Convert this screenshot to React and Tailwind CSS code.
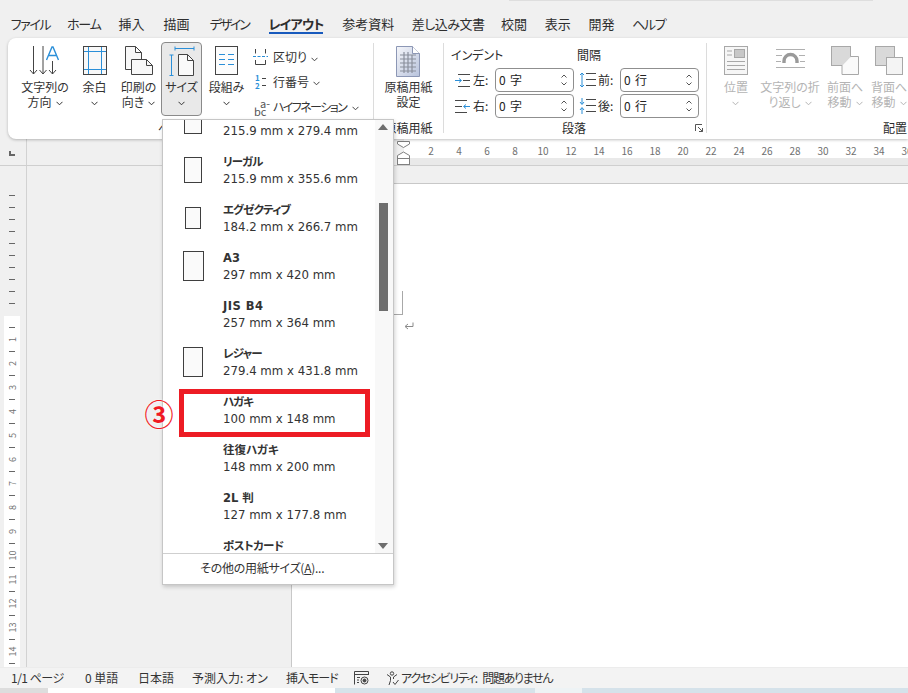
import React from "react";

const BLUE = "#2b8fd8";
const DARK = "#484848";

function Chev({ c = "#444" }) {
  return (
    <svg width="7" height="5" viewBox="0 0 7 5" className="inline-block" fill="none" stroke={c} strokeWidth="1">
      <path d="M0.5 0.8 L3.5 3.8 L6.5 0.8" />
    </svg>
  );
}

function BigBtn({ w, icon, lines, active, disabled }) {
  const c = disabled ? "#b4b4b4" : "#333";
  return (
    <div
      className={
        "flex flex-col items-center h-[74px] shrink-0 pt-[3px] " +
        (active ? "rounded-[4px] border border-[#8a8a8a] bg-[#e9e9e9] -mt-px" : "")
      }
      style={{ width: w, color: c }}
    >
      <div className="h-[33px] flex items-start justify-center">{icon}</div>
      <div className="text-[12px] leading-[15px] text-center whitespace-nowrap">
        <div>{lines[0]}</div>
        {lines[1] ? (
          <div>{lines[1]}<span className="ml-1"><Chev c={c} /></span></div>
        ) : (
          <div><Chev c={c} /></div>
        )}
      </div>
    </div>
  );
}

function Sep() {
  return <div className="w-px h-[90px] mt-[5px] bg-[#dcdcdc] shrink-0" />;
}

function Spin({ v }) {
  return (
    <div className="relative flex items-center w-[79px] h-[24px] rounded-[4px] border border-[#8f8f8f] bg-white pl-[3px] text-[12px] text-[#222] shrink-0">
      <span className="tracking-[0.8px]">{v}</span>
      <div className="ml-auto mr-[6px] flex flex-col items-center gap-[4px]">
        <svg width="6" height="4" viewBox="0 0 6 4" fill="none" stroke="#555"><path d="M0.5 3.5 L3 1 L5.5 3.5" /></svg>
        <svg width="6" height="4" viewBox="0 0 6 4" fill="none" stroke="#555"><path d="M0.5 0.5 L3 3 L5.5 0.5" /></svg>
      </div>
    </div>
  );
}

const Lines3 = ({ x = 0 }) => (
  <g stroke={DARK} strokeWidth="1">
    <path d={`M${x} 1.5 H${x + 10} M${x} 7.5 H${x + 10} M${x} 13.5 H${x + 10}`} />
  </g>
);

function SpaceIcon({ kind }) {
  if (kind === "left")
    return (
      <svg width="15" height="15" viewBox="0 0 15 15" fill="none">
        <path d="M3 1.5 H15 M8 7.5 H15 M3 13.5 H15" stroke={DARK} />
        <path d="M0 7.5 H6 M4 5.5 L6.5 7.5 L4 9.5" stroke={BLUE} />
      </svg>
    );
  if (kind === "right")
    return (
      <svg width="15" height="15" viewBox="0 0 15 15" fill="none">
        <path d="M0 1.5 H12 M0 7.5 H7 M0 13.5 H12" stroke={DARK} />
        <path d="M15 7.5 H9 M11 5.5 L8.5 7.5 L11 9.5" stroke={BLUE} />
      </svg>
    );
  if (kind === "before")
    return (
      <svg width="17" height="16" viewBox="0 0 17 16" fill="none">
        <Lines3 x={7} />
        <path d="M3 1 V15 M1 3 L3 1 L5 3 M1 13 L3 15 L5 13" stroke={BLUE} />
      </svg>
    );
  return (
    <svg width="17" height="16" viewBox="0 0 17 16" fill="none">
      <Lines3 x={7} />
      <path d="M3 0 V6 M1 4 L3 6.5 L5 4 M3 10 V16 M1 12 L3 9.5 L5 12" stroke={BLUE} />
    </svg>
  );
}

function Sheet({ w, h }) {
  return <div className="border border-[#3f3f3f] bg-[#fafafa]" style={{ width: w, height: h }} />;
}

const items = [
  { t: "", s: "215.9 mm x 279.4 mm", i: [18, 23] },
  { t: "リーガル", k: "tracking-[-0.9px]", s: "215.9 mm x 355.6 mm", i: [18, 26] },
  { t: "エグゼクティブ", k: "tracking-[-0.9px]", s: "184.2 mm x 266.7 mm", i: [16, 22] },
  { t: "A3", k: "", s: "297 mm x 420 mm", i: [21, 30] },
  { t: "JIS B4", k: "tracking-[0.5px]", s: "257 mm x 364 mm" },
  { t: "レジャー", k: "tracking-[-0.9px]", s: "279.4 mm x 431.8 mm", i: [20, 30] },
  { t: "ハガキ", k: "tracking-[-0.9px]", s: "100 mm x 148 mm" },
  { t: "往復ハガキ", k: "", s: "148 mm x 200 mm" },
  { t: "2L 判", k: "", s: "127 mm x 177.8 mm" },
  { t: "ポストカード", k: "tracking-[-0.5px]", s: "" },
];

const rulerNums = [2, 4, 6, 8, 10, 12, 14, 16, 18, 20, 22, 24, 26, 28, 30, 32, 34, 36];
const tabs = [
  ["ファイル", 37, "tracking-[-1.4px]"], ["ホーム", 32, "tracking-[-1.2px]"], ["挿入", 26, ""], ["描画", 26, ""],
  ["デザイン", 42, "tracking-[-2.2px]"], ["レイアウト", 54, "tracking-[-0.8px]"],
  ["参考資料", 53, ""], ["差し込み文書", 69, "tracking-[-0.5px]"], ["校閲", 25, ""], ["表示", 25, ""], ["開発", 25, ""], ["ヘルプ", 32, "tracking-[-1.3px]"],
];

const Tick = () => (
  <div className="h-[12px] flex items-center justify-center">
    <div className="w-[6px] h-px bg-[#666]" />
  </div>
);

export default function App() {
  return (
    <div className="relative w-[908px] h-[693px] overflow-hidden flex flex-col bg-[#f0f0f0] text-[#2b2b2b] [font-feature-settings:'palt'] font-['Noto_Sans_CJK_JP','Noto_Sans',sans-serif]">
      <div className="absolute left-[509px] top-0 w-[364px] h-px bg-[#dedede]" />

      {/* tabs */}
      <div className="h-[38px] shrink-0 flex items-start pl-[12px] pt-[15px] gap-[18.8px] text-[13px] leading-[18px] text-[#2e2e2e]">
        {tabs.map(([t, w, k]) => (
          <div key={t} className="relative flex justify-center whitespace-nowrap" style={{ width: w }}>
            <span className={(t === "レイアウト" ? "font-bold " : "") + k}>{t}</span>
            {t === "レイアウト" && <div className="absolute left-0 right-0 top-[17px] h-[2px] bg-[#185abd]" />}
          </div>
        ))}
      </div>

      {/* ribbon */}
      <div className="relative z-10 ml-2 h-[101px] shrink-0 bg-white rounded-l-[8px] shadow-[0_1px_3px_rgba(0,0,0,0.25)] flex overflow-hidden">
        <div className="w-[365px] shrink-0 mt-[5px] flex flex-col">
          <div className="flex h-[76px] pl-[9px]">
            <BigBtn w={56} lines={["文字列の", "方向"]} icon={
              <svg width="32" height="30" viewBox="0 0 32 30" fill="none">
                <g stroke="#444">
                  <path d="M4.5 0 V28 M1 24 L4.5 28 L8 24" />
                  <path d="M14 0 V28 M10.5 24 L14 28 L17.5 24" />
                  <path d="M23.5 15 V28 M20 24 L23.5 28 L27 24" />
                </g>
                <path d="M17.5 14 L23 1 L24 1 L29.5 14 M19.5 9.5 H27.5" stroke={BLUE} strokeWidth="1.4" />
              </svg>
            } />
            <BigBtn w={43} lines={["余白"]} icon={
              <svg width="24" height="29" viewBox="0 0 24 29" fill="none">
                <rect x="0.5" y="0.5" width="23" height="28" fill="#f8f8f8" stroke="#444" />
                <path d="M5.5 1 V28 M18.5 1 V28 M1 5.5 H23 M1 23.5 H23" stroke={BLUE} />
              </svg>
            } />
            <BigBtn w={45} lines={["印刷の", "向き"]} icon={
              <svg width="30" height="30" viewBox="0 0 30 30" fill="none" stroke="#444">
                <path d="M1.5 23.5 V0.5 H11.5 L17.5 6.5 V14 M11.5 0.5 V6.5 H17.5 M1.5 23.5 H7" fill="#f8f8f8" />
                <path d="M7.5 13.5 H22.5 L28.5 19.5 V28.5 H7.5 Z" fill="#f8f8f8" />
                <path d="M22.5 13.5 V19.5 H28.5" />
              </svg>
            } />
            <BigBtn w={41} active lines={["サイズ"]} icon={
              <svg width="26" height="30" viewBox="0 0 26 30" fill="none">
                <path d="M6 2.5 H25 M6 0.5 V4.5 M25 0.5 V4.5 M2.5 9 V30 M0.5 9 H4.5 M0.5 29.5 H4.5" stroke={BLUE} />
                <path d="M9.5 29.5 V8.5 H18.5 L24.5 14.5 V29.5 Z" fill="#fafafa" stroke="#444" />
                <path d="M18.5 8.5 V14.5 H24.5" stroke="#444" />
              </svg>
            } />
            <BigBtn w={49} lines={["段組み"]} icon={
              <svg width="23" height="29" viewBox="0 0 23 29" fill="none">
                <rect x="0.5" y="0.5" width="22" height="28" fill="#fcfcfc" stroke="#444" />
                <path d="M4 8.5 H10 M13 8.5 H19 M4 13.5 H10 M13 13.5 H19 M4 18.5 H10 M13 18.5 H19" stroke={BLUE} />
              </svg>
            } />
            <div className="flex flex-col text-[12px] text-[#333] pl-[2px] whitespace-nowrap">
              <div className="flex items-center h-[26px] mt-[2px]">
                <svg width="15" height="16" viewBox="0 0 15 16" fill="none" className="mr-[5px]">
                  <path d="M2.5 0 V4.5 M12.5 0 V4.5 M2.5 11 V15.5 H12.5 V11" stroke="#444" />
                  <path d="M0 7.5 H15" stroke={BLUE} strokeDasharray="3 1.5" />
                </svg>
                <span>区切り</span><span className="ml-[4px]"><Chev /></span>
              </div>
              <div className="flex items-center h-[26px]">
                <div className="w-[20px] flex items-center pl-[2px]">
                  <div className="flex flex-col text-[8px] leading-[8px] font-bold text-[#2b8fd8]"><span>1</span><span>2</span></div>
                  <div className="flex flex-col gap-[6px] ml-[2px] mb-[1px]"><div className="w-[4px] h-px bg-[#444]" /><div className="w-[4px] h-px bg-[#444]" /></div>
                </div>
                <span>行番号</span><span className="ml-[4px]"><Chev /></span>
              </div>
              <div className="flex items-center h-[26px]">
                <div className="w-[20px] text-[11px] leading-[8px] text-[#555] flex flex-col pl-[1px]">
                  <span className="pl-[6px]">a-</span><span>bc</span>
                </div>
                <span className="tracking-[-1.55px]">ハイフネーション</span><span className="ml-[6px]"><Chev /></span>
              </div>
            </div>
          </div>
          <div className="h-[18px] pl-[150px] text-[12px] leading-[18px]">ページ設定</div>
        </div>
        <Sep />
        <div className="w-[69px] shrink-0 mt-[5px] flex flex-col">
          <div className="flex h-[76px] justify-center">
            <div className="flex flex-col items-center pt-[3px] text-[#333]">
              <div className="h-[33px]">
                <svg width="24" height="31" viewBox="0 0 24 31" fill="none">
                  <defs>
                    <linearGradient id="gp" x1="0" y1="0" x2="1" y2="1">
                      <stop offset="0" stopColor="#f5f6fa" /><stop offset="1" stopColor="#b8c3dc" />
                    </linearGradient>
                  </defs>
                  <path d="M0.5 0.5 H16.5 L23.5 7.5 V30.5 H0.5 Z" fill="url(#gp)" stroke="#8c97b5" />
                  <path d="M16.5 0.5 V7.5 H23.5" fill="#fff" stroke="#8c97b5" />
                  <path d="M4 9 H20 M4 13 H20 M4 17 H20 M4 21 H20 M4 25 H20 M8 6 V27 M12 6 V27 M16 9 V27" stroke="#8a8f9c" strokeWidth="1.2" />
                </svg>
              </div>
              <div className="text-[12px] leading-[15px] text-center whitespace-nowrap"><div>原稿用紙</div><div>設定</div></div>
            </div>
          </div>
          <div className="h-[18px] text-center text-[12px] leading-[18px]">原稿用紙</div>
        </div>
        <Sep />
        <div className="w-[262px] shrink-0 mt-[5px] flex flex-col relative text-[#2b2b2b]">
          <div className="h-[25px] flex text-[12px] leading-[23px] pl-[7px] whitespace-nowrap">
            <span className="w-[126px]">インデント</span><span>間隔</span>
          </div>
          <div className="flex flex-col gap-[2px] pl-[7px] h-[51px] text-[12px]">
            <div className="flex items-center gap-[3px]">
              <div className="flex items-center w-[123px]">
                <div className="ml-[4px]"><SpaceIcon kind="left" /></div>
                <span className="ml-[3px] w-[22px]">左:</span><Spin v="0 字" />
              </div>
              <div className="flex items-center w-[122px]">
                <div className="ml-[2px]"><SpaceIcon kind="before" /></div>
                <span className="ml-[2px] w-[22px]">前:</span><Spin v="0 行" />
              </div>
            </div>
            <div className="flex items-center gap-[3px]">
              <div className="flex items-center w-[123px]">
                <div className="ml-[4px]"><SpaceIcon kind="right" /></div>
                <span className="ml-[3px] w-[22px]">右:</span><Spin v="0 字" />
              </div>
              <div className="flex items-center w-[122px]">
                <div className="ml-[2px]"><SpaceIcon kind="after" /></div>
                <span className="ml-[2px] w-[22px]">後:</span><Spin v="0 行" />
              </div>
            </div>
          </div>
          <div className="h-[18px] text-center text-[12px] leading-[18px] pr-[2px]">段落</div>
          <svg width="8" height="8" viewBox="0 0 8 8" fill="none" stroke="#555" className="absolute left-[251px] top-[81px]">
            <path d="M0.5 7 V0.5 H7 M3 3 L7.5 7.5 M7.5 4 V7.5 H4" />
          </svg>
        </div>
        <Sep />
        <div className="flex-1 mt-[5px] flex flex-col min-w-0">
          <div className="flex h-[76px] pl-[5px]">
            <BigBtn w={48} disabled lines={["位置"]} icon={
              <svg width="24" height="29" viewBox="0 0 24 29" fill="none" stroke="#a8a8a8">
                <rect x="0.5" y="0.5" width="23" height="28" fill="#f6f6f6" />
                <rect x="10.5" y="3.5" width="10" height="8" fill="#c8c8c8" />
                <path d="M3 5 H8 M3 9 H8 M3 15.5 H21 M3 19.5 H21 M3 23.5 H21" />
              </svg>
            } />
            <BigBtn w={60} disabled lines={["文字列の折", "り返し"]} icon={
              <svg width="29" height="26" viewBox="0 0 29 26" fill="none" stroke="#b0b0b0">
                <path d="M0 3.5 H29 M0 9.5 H6 M23 9.5 H29 M0 15.5 H5 M24 15.5 H29 M0 21.5 H29" />
                <path d="M8 17 V15 A6.5 6.5 0 0 1 21 15 V17" stroke="#9a9a9a" strokeWidth="3.4" />
              </svg>
            } />
            <div className="w-[4px] shrink-0" />
            <BigBtn w={42} disabled lines={["前面へ", "移動"]} icon={
              <svg width="28" height="29" viewBox="0 0 28 29" fill="none" stroke="#a8a8a8">
                <rect x="0.5" y="0.5" width="19" height="19" fill="#d9d9d9" />
                <path d="M20 10.5 H27.5 V28.5 H11 V20" fill="#fafafa" />
              </svg>
            } />
            <div className="w-[2px] shrink-0" />
            <BigBtn w={42} disabled lines={["背面へ", "移動"]} icon={
              <svg width="28" height="29" viewBox="0 0 28 29" fill="none" stroke="#a8a8a8">
                <rect x="0.5" y="0.5" width="19" height="19" fill="#d9d9d9" />
                <rect x="11.5" y="11.5" width="16" height="17" fill="#f4f4f4" />
              </svg>
            } />
          </div>
          <div className="h-[18px] pl-[176px] text-[12px] leading-[18px] whitespace-nowrap">配置</div>
        </div>
      </div>

      {/* horizontal ruler */}
      <div className="relative h-[27px] shrink-0 flex border-b border-[#cfcfcf]">
        <div className="w-[27px] shrink-0 border-r border-[#d2d2d2] pl-[9px] pt-[12px]">
          <div className="w-[6px] h-[5px] border-l-2 border-b-2 border-[#666]" />
        </div>
        <div className="w-[377px] shrink-0" />
        <div className="flex-1 min-w-0 flex flex-col bg-[#e9e9e9]">
          <div className="h-[19px] bg-white flex pl-[13px] text-[10px] leading-[23px] text-[#6f6f6f] overflow-hidden">
            {rulerNums.map((n) => (
              <div key={n} className="w-[28px] shrink-0 text-center">{n}</div>
            ))}
          </div>
        </div>
        <svg width="14" height="25" viewBox="0 0 14 25" fill="none" stroke="#808080" className="absolute left-[397px] top-[1px]">
          <path d="M0.5 1.5 H12.5 V4 L6.5 7.5 L0.5 4 Z" fill="#fff" />
          <path d="M6.5 12 L12.5 15.5 V18.5 H0.5 V15.5 Z" fill="#fff" />
          <rect x="0.5" y="18.5" width="12" height="6" fill="#fff" />
        </svg>
      </div>

      {/* document */}
      <div className="flex-1 min-h-0 flex">
        <div className="w-[27px] shrink-0 border-r border-[#d2d2d2] flex flex-col">
          <div className="h-[150px] pt-[23px] pl-[4px]">
            <div className="w-[16px]">{Array.from({ length: 10 }).map((_, i) => <Tick key={i} />)}</div>
          </div>
          <div className="flex-1 ml-[4px] w-[16px] bg-white pt-[5px] overflow-hidden">
            {Array.from({ length: 14 }).map((_, i) => (
              <React.Fragment key={i}>
                <Tick />
                <div className="h-[12px] flex items-center justify-center text-[9px] leading-none text-[#6f6f6f]">
                  <span className="-rotate-90 inline-block">{i + 1}</span>
                </div>
              </React.Fragment>
            ))}
            <Tick />
          </div>
        </div>
        <div className="w-[265px] shrink-0" />
        <div className="flex-1 min-w-0 mt-[17px] bg-white border-l border-t border-[#c8c8c8] pt-[107px] pl-[100px] -ml-px">
          <div className="w-[11px] h-[24px] border-r border-b border-[#a8a8a8]" />
          <svg width="10" height="9" viewBox="0 0 10 9" fill="none" stroke="#8a8a8a" className="ml-[12px] mt-[7px]">
            <path d="M9 0.5 V4.5 H1.5 M4 2 L1 4.5 L4 7" />
          </svg>
        </div>
      </div>

      {/* status */}
      <div className="h-[21px] shrink-0 bg-[#f3f3f3] border-t border-[#ececec] flex items-center pl-[11px] text-[12px] leading-[20px] text-[#333] whitespace-nowrap">
        <span className="w-[74px] tracking-[-0.5px]">1/1 ページ</span>
        <span className="w-[53px]">0 単語</span>
        <span className="w-[54px]">日本語</span>
        <span className="w-[94px]">予測入力: オン</span>
        <span className="w-[68px] tracking-[-1px]">挿入モード</span>
        <svg width="15" height="14" viewBox="0 0 15 14" fill="none" stroke="#444" className="mr-[17px]">
          <path d="M0.5 13.5 V0.5 H14.5 V4 M0.5 3.5 H14.5 M3 6.5 H6 M3 9 H5 M3 11.5 H5" />
          <circle cx="10.5" cy="9.5" r="3.5" />
          <circle cx="10.5" cy="9.5" r="1.5" fill="#444" />
        </svg>
        <svg width="13" height="15" viewBox="0 0 13 15" fill="none" stroke="#444" className="mr-[2px]">
          <circle cx="6" cy="2.5" r="1.7" />
          <path d="M1 3.5 L4.5 6 V9.5 L3 14 M11 3.5 L7.5 6 V8 M7 11 L9 13.5 L12.5 9" />
        </svg>
        <span className="tracking-[-1.3px] [word-spacing:4px]">アクセシビリティ: 問題ありません</span>
      </div>
      <div className="h-[5px] shrink-0 flex">
        <div className="w-[48px] bg-[#dddddd]" />
        <div className="w-[287px] bg-white" />
        <div className="w-[200px] bg-[#d6e3ea]" />
        <div className="w-[47px] bg-[#eef3f5]" />
        <div className="flex-1 bg-[#d5e2ea]" />
      </div>

      {/* dropdown */}
      <div className="absolute z-20 left-[162px] top-[119px] w-[232px] h-[466px] bg-white border border-[#c6c6c6] shadow-[1px_2px_4px_rgba(0,0,0,0.18)] flex flex-col">
        <div className="flex flex-1 min-h-0">
          <div className="w-[212px] overflow-hidden">
            <div className="-mt-[20px]">
              {items.map((it, idx) => (
                <div key={idx} className="h-[48px] flex pb-[4px] items-center">
                  <div className="w-[60px] shrink-0 flex justify-center">
                    {it.i && <Sheet w={it.i[0]} h={it.i[1]} />}
                  </div>
                  <div className="mt-[2px] text-[#333] whitespace-nowrap">
                    <div className={"h-[17px] text-[11.5px] leading-[17px] font-bold font-['DejaVu_Sans','Noto_Sans_CJK_JP',sans-serif] " + (it.k || "")}>{it.t}</div>
                    <div className="h-[17px] text-[11.75px] leading-[17px] font-['DejaVu_Sans',sans-serif]">{it.s}</div>
                  </div>
                </div>
              ))}
            </div>
          </div>
          <div className="w-[18px] bg-[#f8f8f8] flex flex-col items-center ml-auto pr-[2px]">
            <svg width="10" height="7" viewBox="0 0 10 7" className="mt-[4px]"><path d="M5 0 L10 6 H0 Z" fill="#6e6e6e" /></svg>
            <div className="w-[9px] h-[108px] mt-[72px] bg-[#6e6e6e]" />
            <svg width="10" height="7" viewBox="0 0 10 7" className="mt-auto mb-[3px]"><path d="M0 0 H10 L5 6 Z" fill="#6e6e6e" /></svg>
          </div>
        </div>
        <div className="h-[31px] shrink-0 border-t border-[#cfcfcf] pl-[37px] text-[12px] leading-[28px] text-[#333] whitespace-nowrap tracking-[-0.25px]">
          その他の用紙サイズ(<span className="underline">A</span>)...
        </div>
      </div>

      {/* annotation */}
      <div className="absolute z-30 left-[179px] top-[389px] w-[191px] h-[48px] border-[5px] border-[#ed1c24]" />
      <div className="absolute z-30 left-[143px] top-[394px] w-[32px] h-[38px] text-center text-[29px] leading-[38px] font-bold text-[#f01a24] [text-shadow:0_0_2px_#fff]">③</div>
    </div>
  );
}
